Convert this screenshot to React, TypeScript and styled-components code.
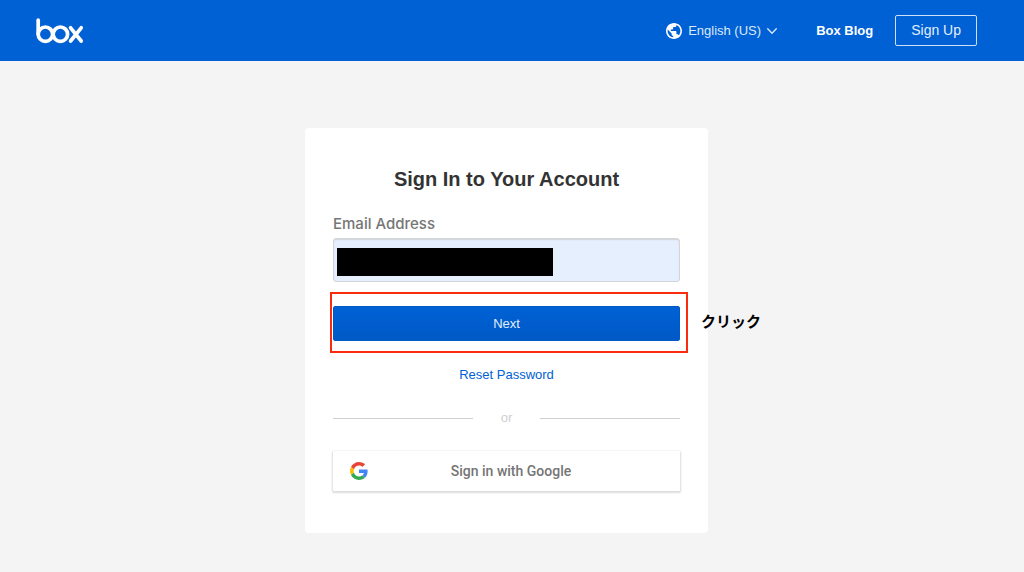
import React from "react";
import styled, { createGlobalStyle } from "styled-components";

const GlobalStyle = createGlobalStyle`
  *, *::before, *::after { box-sizing: border-box; }
  html { background: #f4f4f4; }
  body { margin: 0; font-family: "Liberation Sans", Arial, sans-serif; color: #333; }
  button, input, select { font-family: inherit; }
`;

const Header = styled.header`
  display: flex;
  align-items: center;
  justify-content: space-between;
  height: 61px;
  padding: 0 47px 0 36px;
  background: #0061d5;
  color: #fff;
`;

const LogoLink = styled.a`
  display: block;
  line-height: 0;
`;

const Nav = styled.nav`
  display: flex;
  align-items: center;
`;

const Language = styled.label`
  display: flex;
  align-items: center;
  gap: 6px;
`;

const LanguageSelect = styled.select`
  appearance: none;
  border: 0;
  padding: 0;
  background: transparent;
  color: #dbe9fa;
  font-size: 13px;
`;

const BlogLink = styled.a`
  margin: 0 22px 0 39px;
  color: #fff;
  font-size: 13px;
  font-weight: 700;
  text-decoration: none;
`;

const SignUpLink = styled.a`
  padding: 0 15px;
  border: 1px solid #cfe0f6;
  border-radius: 2px;
  color: #e3eefb;
  font-size: 14px;
  line-height: 29px;
  text-decoration: none;
`;

const Main = styled.main`
  display: flex;
  justify-content: center;
  padding: 67px 11px 39px 0;
`;

const Card = styled.form`
  display: flex;
  flex-direction: column;
  width: 100%;
  max-width: 403px;
  padding: 38px 28px 42px;
  border-radius: 4px;
  background: #fff;
`;

const Title = styled.h1`
  margin: 0 0 24px;
  font-size: 20px;
  line-height: 26px;
  text-align: center;
`;

const FieldLabel = styled.label`
  margin-bottom: 6px;
  color: #767676;
  font-family: Inter, "Liberation Sans", sans-serif;
  font-size: 15px;
  font-weight: 500;
  line-height: 16px;
`;

const Field = styled.div`
  position: relative;
  margin-bottom: 24px;
`;

const EmailInput = styled.input`
  display: block;
  width: 100%;
  height: 44px;
  padding: 0 12px;
  border: 1px solid #d3d5d9;
  border-radius: 3px;
  background: #e6effe;
  box-shadow: inset 0 1px 1px #d3d5d9;
  font-size: 14px;
`;

const Redaction = styled.div`
  position: absolute;
  top: 10px;
  left: 4px;
  width: 216px;
  height: 28px;
  background: #000;
`;

const Step = styled.div`
  position: relative;
`;

const NextButton = styled.button`
  display: block;
  width: 100%;
  height: 35px;
  border: 1px solid #0059c4;
  border-radius: 2px;
  background: linear-gradient(#0061d5, #0059c6);
  color: #e3eefb;
  font-size: 13px;
`;

const Highlight = styled.div`
  position: absolute;
  top: -14px;
  right: -8px;
  bottom: -12px;
  left: -3px;
  border: 2px solid #fb2c0e;
  pointer-events: none;
`;

const Note = styled.span`
  position: absolute;
  top: 4px;
  left: 100%;
  margin-left: 21px;
  color: #000;
  font-family: "Noto Sans CJK JP", sans-serif;
  font-size: 15px;
  font-weight: 700;
  line-height: 22px;
  white-space: nowrap;
`;

const ResetLink = styled.a`
  align-self: center;
  margin: 26px 0;
  color: #0061d5;
  font-size: 13px;
  line-height: 16px;
  text-decoration: none;
`;

const Divider = styled.div`
  display: flex;
  align-items: center;
  gap: 28px;
  margin-bottom: 24px;
  color: #cfcfcf;
  font-size: 13px;
  line-height: 18px;

  &::before, &::after {
    content: "";
    flex: 1;
    height: 1px;
    background: #cfcfcf;
  }
`;

const GoogleButton = styled.button`
  display: grid;
  grid-template-columns: 18px 1fr;
  align-items: center;
  height: 40px;
  padding: 0 26px 0 17px;
  border: 0;
  border-radius: 1px;
  background: #fff;
  box-shadow: 0 1px 2px 1px rgba(0, 0, 0, 0.14);
  color: #757575;
  font-family: Roboto, sans-serif;
  font-size: 14px;
  font-weight: 500;
`;

const BoxLogo = () => (
  <svg width="48" height="26" viewBox="0 0 48 26" fill="none" stroke="#fff" strokeWidth="3.7" strokeLinecap="round" strokeLinejoin="round">
    <path d="M2.2 2.2V16" />
    <circle cx="9.4" cy="16.2" r="7.2" />
    <circle cx="24.4" cy="16.2" r="7.2" />
    <path d="M34.6 9.8L45.2 23M45.2 9.8L34.6 23" />
  </svg>
);

const Globe = () => (
  <svg width="16" height="16" viewBox="2 2 20 20" fill="#fff">
    <path d="M12 2C6.48 2 2 6.48 2 12s4.48 10 10 10 10-4.48 10-10S17.52 2 12 2zm-1 17.93c-3.95-.49-7-3.85-7-7.93 0-.62.08-1.21.21-1.79L9 15v1c0 1.1.9 2 2 2v1.93zm6.9-2.54c-.26-.81-1-1.39-1.9-1.39h-1v-3c0-.55-.45-1-1-1H8v-2h2c.55 0 1-.45 1-1V7h2c1.1 0 2-.9 2-2v-.41c2.93 1.19 5 4.06 5 7.41 0 2.08-.8 3.97-2.1 5.39z" />
  </svg>
);

const Chevron = () => (
  <svg width="10" height="6" viewBox="0 0 10 6" fill="none" stroke="#dbe9fa" strokeWidth="1.3" strokeLinecap="round" strokeLinejoin="round">
    <path d="M.7.8L5 5.2 9.3.8" />
  </svg>
);

const GoogleLogo = () => (
  <svg width="18" height="18" viewBox="0 0 48 48">
    <path fill="#EA4335" d="M24 9.5c3.54 0 6.71 1.22 9.21 3.6l6.85-6.85C35.9 2.38 30.47 0 24 0 14.62 0 6.51 5.38 2.56 13.22l7.98 6.19C12.43 13.72 17.74 9.5 24 9.5z" />
    <path fill="#4285F4" d="M46.98 24.55c0-1.57-.15-3.09-.38-4.55H24v9.02h12.94c-.58 2.96-2.26 5.48-4.78 7.18l7.73 6c4.51-4.18 7.09-10.36 7.09-17.65z" />
    <path fill="#FBBC05" d="M10.53 28.59c-.48-1.45-.76-2.99-.76-4.59s.27-3.14.76-4.59l-7.98-6.19C.92 16.46 0 20.12 0 24c0 3.88.92 7.54 2.56 10.78l7.97-6.19z" />
    <path fill="#34A853" d="M24 48c6.48 0 11.93-2.13 15.89-5.81l-7.73-6c-2.15 1.45-4.92 2.3-8.16 2.3-6.26 0-11.57-4.22-13.47-9.91l-7.98 6.19C6.51 42.62 14.62 48 24 48z" />
  </svg>
);

export default function App() {
  return (
    <>
      <GlobalStyle />
      <Header>
        <LogoLink href="#" aria-label="Home">
          <BoxLogo />
        </LogoLink>
        <Nav>
          <Language>
            <Globe />
            <LanguageSelect aria-label="Language">
              <option>English (US)</option>
            </LanguageSelect>
            <Chevron />
          </Language>
          <BlogLink href="#">Box Blog</BlogLink>
          <SignUpLink href="#">Sign Up</SignUpLink>
        </Nav>
      </Header>
      <Main>
        <Card onSubmit={(event) => event.preventDefault()}>
          <Title>Sign In to Your Account</Title>
          <FieldLabel htmlFor="email">Email Address</FieldLabel>
          <Field>
            <EmailInput id="email" type="email" />
            <Redaction />
          </Field>
          <Step>
            <NextButton type="submit">Next</NextButton>
            <Highlight />
            <Note lang="ja">クリック</Note>
          </Step>
          <ResetLink href="#">Reset Password</ResetLink>
          <Divider>or</Divider>
          <GoogleButton type="button">
            <GoogleLogo />
            <span>Sign in with Google</span>
          </GoogleButton>
        </Card>
      </Main>
    </>
  );
}
